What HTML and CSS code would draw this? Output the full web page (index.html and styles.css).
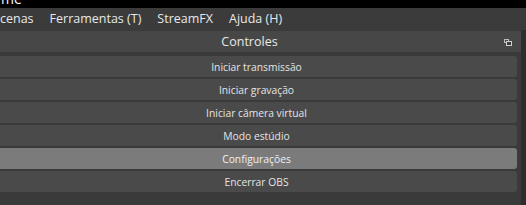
FILE: index.html
```html
<!DOCTYPE html>
<html lang="pt">
<head>
<meta charset="utf-8">
<link rel="stylesheet" href="styles.css">
</head>
<body>
<div class="window">
  <div class="titlebar"><span class="title">me</span></div>
  <div class="menubar">
    <span class="menu m-cenas">cenas</span>
    <span class="menu">Ferramentas (T)</span>
    <span class="menu">StreamFX</span>
    <span class="menu">Ajuda (H)</span>
  </div>
  <div class="dock">
    <div class="dock-main">
      <div class="dock-title">
        <span class="dock-label">Controles</span>
        <svg class="float-icon" width="8" height="7" viewBox="0 0 8 7">
          <rect x="0.5" y="0.5" width="4" height="3" fill="none" stroke="#bdbdbd" stroke-width="1"/>
          <rect x="2.5" y="2.5" width="5" height="4" fill="#3e3e3e" stroke="#d0d0d0" stroke-width="1"/>
        </svg>
      </div>
      <div class="buttons">
        <div class="btn">Iniciar transmissão</div>
        <div class="btn">Iniciar gravação</div>
        <div class="btn">Iniciar câmera virtual</div>
        <div class="btn">Modo estúdio</div>
        <div class="btn btn-hover">Configurações</div>
        <div class="btn">Encerrar OBS</div>
      </div>
    </div>
    <div class="dock-edge"></div>
  </div>
</div>
</body>
</html>
```
FILE: styles.css
```css
html, body {
  margin: 0;
  padding: 0;
  background: #3a3a3a;
  width: 526px;
  height: 205px;
  overflow: hidden;
}
.window {
  display: flex;
  flex-direction: column;
  height: 205px;
  font-family: "Open Sans", "Noto Sans", sans-serif;
  color: #e6e6e6;
}
.titlebar {
  height: 8px;
  background: #000;
  overflow: hidden;
}
.title {
  display: block;
  margin-top: -8px;
  margin-left: 1px;
  font-size: 14px;
  line-height: 14px;
  color: #fff;
}
.menubar {
  height: 22px;
  background: #3b3b3b;
  display: flex;
  align-items: center;
  font-size: 12.5px;
  color: #e8e8e8;
}
.menu {
  padding: 0 8px;
  line-height: 20px;
}
.m-cenas {
  margin-left: -8px;
}
.dock {
  flex: 1;
  display: flex;
  background: #3a3a3a;
}
.dock-main {
  width: 521px;
  display: flex;
  flex-direction: column;
}
.dock-edge {
  flex: 1;
  background: #2e2e2e;
}
.dock-title {
  height: 21px;
  margin-top: 1px;
  background: #474747;
  display: flex;
  align-items: center;
  justify-content: center;
  position: relative;
  font-size: 12.5px;
  color: #e8e8e8;
}
.dock-label {
  margin-right: 22px;
}
.float-icon {
  position: absolute;
  right: 9px;
  top: 8px;
}
.buttons {
  display: flex;
  flex-direction: column;
  gap: 2px;
  margin: 4px 4px 0 -4px;
}
.btn {
  height: 21px;
  background: #4a4a4a;
  border-radius: 3px;
  display: flex;
  align-items: center;
  justify-content: center;
  font-size: 10.3px;
  color: #e4e4e4;
}
.btn-hover {
  background: #7b7b7b;
  color: #f0f0f0;
}
```
